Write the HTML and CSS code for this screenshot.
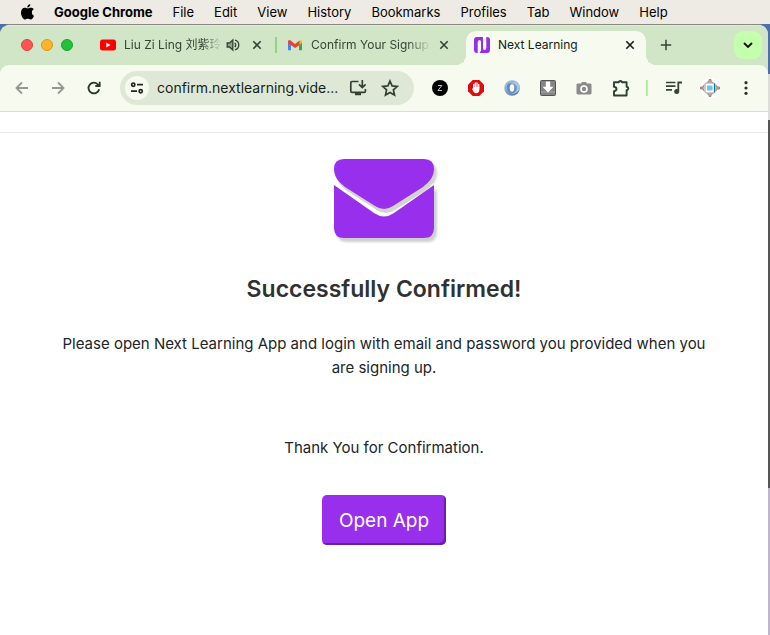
FILE: index.html
```html
<!DOCTYPE html>
<html lang="en">
<head>
<meta charset="utf-8">
<title>Next Learning</title>
<link rel="stylesheet" href="styles.css">
</head>
<body>
<nav class="menubar" aria-label="Menu bar">
  <svg class="apple" viewBox="0 0 13 16"><path d="M9.3 0C9.4 1.900 8 3.600 6.300 3.600 6.100 1.900 7.700.2 9.300 0ZM10.900 8.400c0-1.500.8-2.500 1.900-3.100C12 4.200 10.900 3.800 9.800 3.800c-1.300 0-2.200.7-3 .7-.9 0-1.800-.7-3-.7C1.700 3.800 0 5.500 0 8.700 0 12 2.200 15.500 4.100 15.500c1 0 1.500-.7 2.800-.7s1.700.7 2.800.7c1.500 0 2.800-2.200 3.300-3.800-1.300-.6-2.100-1.800-2.100-3.300Z"/></svg>
  <b>Google Chrome</b><span>File</span><span>Edit</span><span>View</span><span>History</span><span>Bookmarks</span><span>Profiles</span><span>Tab</span><span>Window</span><span>Help</span>
</nav>
<div class="desktop">
  <div class="window">
    <header class="strip">
      <div class="lights"><i class="red"></i><i class="amber"></i><i class="green"></i></div>
      <div class="tab first">
        <svg class="fav" viewBox="0 0 16 16"><rect y="2.500" width="16" height="11" rx="2.500" fill="#f00"/><path d="M6.300 5.600v4.800L10.500 8Z" fill="#fff"/></svg>
        <span class="label fade">Liu Zi Ling 刘紫玲</span>
        <svg class="speaker" viewBox="0 0 14 14" fill="none" stroke="#344534" stroke-width="1.300"><path d="M1.200 5v4H3.500L6.800 12V2L3.500 5Z" fill="#93a48d"/><path d="M8.800 4.800Q10.600 7 8.800 9.200M9 2.200C14 3.600 14 10.400 9 11.800"/></svg>
        <button class="close" aria-label="Close tab"><svg viewBox="0 0 10 10"><path d="M1.300 1.300l7.400 7.400M8.700 1.300L1.300 8.700"/></svg></button>
      </div>
      <div class="tab second">
        <svg class="fav" viewBox="0 0 16 16"><path d="M1 4v9.300h3V7Z" fill="#4285f4"/><path d="M15 4v9.300h-3V7Z" fill="#34a853"/><path d="M12 4.500 13 3.500Q15 2.500 15 5v1L12 8.200Z" fill="#fbbc04"/><path d="M1 4.500Q1.200 2.300 3.400 3.300L8 6.900l4.500-3.500V8L8 11.100 1 6Z" fill="#ea4335"/></svg>
        <span class="label fade">Confirm Your Signup</span>
        <button class="close" aria-label="Close tab"><svg viewBox="0 0 10 10"><path d="M1.300 1.300l7.400 7.400M8.700 1.300L1.300 8.700"/></svg></button>
      </div>
      <div class="tab active">
        <svg class="fav" viewBox="0 0 16 16"><rect width="16" height="16" rx="3" fill="#962eeb"/><path d="M3.700 16V5.500Q3.700 2.900 5.600 2.900Q6.800 2.900 7 4.500V11Q7.300 13.400 9.500 13.400Q12.300 13.200 12.300 10V0H9.200V9.500Q9.200 10.500 8.700 9.500V3Q8 1 6 1" fill="none"/><path d="M3.700 16V5.500Q3.700 3 5.500 3Q7 3 7 5V13.500L5.500 16Z" fill="#fff"/><path d="M9 0V11Q9 13 10.500 13Q12.300 13 12.300 10.500V0Z" fill="#fff"/></svg>
        <span class="label">Next Learning</span>
        <button class="close" aria-label="Close tab"><svg viewBox="0 0 10 10"><path d="M1.300 1.300l7.400 7.400M8.700 1.300L1.300 8.700"/></svg></button>
      </div>
      <button class="newtab" aria-label="New tab"><svg viewBox="0 0 12 12"><path d="M6 .8v10.400M.8 6h10.400"/></svg></button>
      <button class="search" aria-label="Search tabs"><svg viewBox="0 0 10 10"><path d="M1 3l4 4 4-4"/></svg></button>
    </header>
    <div class="chrome">
    <div class="toolbar">
      <button class="nav muted" aria-label="Back"><svg viewBox="0 0 16 16"><path d="M14 8H2.500M8 2.500 2.500 8 8 13.500"/></svg></button>
      <button class="nav muted" aria-label="Forward"><svg viewBox="0 0 16 16"><path d="M2 8h11.500M8 2.500 13.500 8 8 13.500"/></svg></button>
      <button class="nav" aria-label="Reload"><svg viewBox="0 0 16 16"><path d="M13.200 9.200A5.400 5.400 0 1 1 12.200 4.700L13 5.700M13.700 1.800V6H9.300"/></svg></button>
      <div class="omnibox">
        <button class="site" aria-label="Site information"><svg viewBox="0 0 14 14" fill="none" stroke="#1e2b1e" stroke-width="1.700"><circle cx="3.300" cy="3.700" r="1.600"/><path d="M7 3.700h6M1 10.200h6"/><circle cx="10.700" cy="10.200" r="1.600"/></svg></button>
        <input class="url" aria-label="Address" value="confirm.nextlearning.vide...">
        <button class="act" aria-label="Install app"><svg viewBox="0 0 18 18"><path d="M9.500 2.500H3Q1.800 2.500 1.800 3.700v8.500q0 1.200 1.200 1.200h12.200q1.200 0 1.200-1.200V10M13.300 1v7.300M10 5.400l3.300 3.200 3.300-3.200"/><path d="M6 13.500h6v2.700H6Z" fill="#344034" stroke="none"/></svg></button>
        <button class="act" aria-label="Bookmark"><svg viewBox="0 0 18 18"><path d="M9 2l2.100 4.900 5.200.5-3.900 3.500 1.100 5.200L9 13.400l-4.500 2.700 1.100-5.200L1.700 7.400l5.200-.5Z"/></svg></button>
      </div>
      <div class="extensions">
        <svg viewBox="0 0 16 16"><circle cx="8" cy="8" r="8"/><path d="M6 5.500h3.800L6 10.500h4" fill="none" stroke="#ddd" stroke-width=".9"/></svg>
        <svg viewBox="0 0 16 16"><path d="M4.700 0h6.600L16 4.700v6.600L11.300 16H4.700L0 11.300V4.700Z" fill="#e00b0b"/><path d="M5.700 8V4.300M7.300 8V2.900M9 8V3M10.700 8V4.300" stroke="#fff" stroke-width="1.300" stroke-linecap="round"/><path d="M5 7h6.400v2.500Q11.200 13.300 8.200 13.300 6.400 13.300 5.300 11.500L3.900 8.800Q4.400 8 5 8.800Z" fill="#fff"/></svg>
        <svg viewBox="0 0 16 16"><defs><linearGradient id="ring" x2="1" y2="1"><stop stop-color="#b6cee7"/><stop offset="1" stop-color="#3e6ca3"/></linearGradient></defs><circle cx="8" cy="8" r="7.800" fill="url(#ring)"/><path d="M12 .9Q17 4.500 15.500 9 13 14.500 7.200 13.700 13.700 11.800 12.600 6.500 12 4 7 2.600Z" fill="#a6c4e5"/><path d="M4 3.500Q1 8 5 12Q8 14 11 12.500Q6 12 5.500 8Q5.300 5 8 3.500Z" fill="#5f8cbd"/><ellipse cx="8" cy="8" rx="2.200" ry="3.800" fill="#f7faef"/></svg>
        <svg viewBox="0 0 16 16"><rect x=".5" y=".5" width="15" height="15" rx="1" fill="#858585" stroke="#555"/><path d="M1 12h14" stroke="#aaa"/><path d="M5.800 1.500h4.400v5.200h3.300L8 12.600 2.500 6.700h3.300Z" fill="#fff"/></svg>
        <svg viewBox="0 0 16 16"><path d="M5 3.500l1-1.500h4L11 3.500h3.500L15.500 4.500v9l-1 1H1.500L.5 13.500v-9l1-1Z" fill="#8b8b8b"/><circle cx="8" cy="9" r="3" fill="none" stroke="#fff" stroke-width="1.600"/></svg>
        <svg class="puzzle" viewBox="0 0 18 18"><path d="M2 3.300H6.800Q7 2 8.400 2T10 3.300H14.600V7.800Q16.300 8 16.300 9.500T14.600 11.200V16.500H2V12.200Q4.500 11.800 4.500 10T2 7.800Z" fill="none" stroke="#2e402f" stroke-width="1.900" stroke-linejoin="round"/></svg>
      </div>
      <div class="tools">
        <svg viewBox="0 0 16 16"><path d="M0 2.500h9.500M0 6.200h9.500M0 9.900h6" stroke="#344534" stroke-width="1.700"/><path d="M12.300 11V2.500H16" fill="none" stroke="#344534" stroke-width="1.800"/><circle cx="10.700" cy="11.500" r="2.500" fill="#344534"/></svg>
        <svg class="avatar" viewBox="0 0 20 20"><circle cx="10" cy="10" r="10" fill="#fff"/><path d="M7 4.500 9 3.500V1.500h2v2l2 1M7 15.500l2 1v2h2v-2l2-1M4 7 3 9H.5v2H3l1 2M16 7l1 2h2.500v2H17l-1 2" fill="#b8a4a2" stroke="#a08583"/><rect x="4.500" y="4.500" width="11" height="11" rx="2" fill="#a99290"/><rect x="5.500" y="5.500" width="9" height="9" fill="#fff"/><rect x="7" y="7.500" width="5.500" height="5" fill="#63c7fa"/><path d="M14.500 5.500v9" stroke="#237b9a" stroke-width="1.300"/></svg>
        <button class="more" aria-label="More"><svg viewBox="0 0 4 16"><circle cx="2" cy="2.700" r="1.600"/><circle cx="2" cy="8" r="1.600"/><circle cx="2" cy="13.300" r="1.600"/></svg></button>
      </div>
    </div>
    </div>
    <div class="pagebar"></div>
    <main class="page">
      <svg class="mail" viewBox="0 0 104 86">
        <defs>
          <path id="flap" d="M10 0H90Q100 0 100 10C100 18 95 23 89 28L59 47Q50 53 41 47L11 28C5 23 0 18 0 10Q0 0 10 0Z"/>
          <path id="pocket" d="M0 26 40 54Q50 61 60 54L100 26V69Q100 79 90 79H10Q0 79 0 69Z"/>
          <filter id="soft" x="-10%" y="-10%" width="120%" height="120%"><feGaussianBlur stdDeviation=".8"/></filter>
        </defs>
        <g fill="#cfcfcf" filter="url(#soft)"><use href="#flap" x="3" y="4"/><use href="#pocket" x="3" y="4"/></g>
        <path d="M0 20 41 50Q50 56 59 50L99 24V28L60 56Q50 61 40 56L0 27Z" fill="#fff"/>
        <use href="#flap" x="2" y="4" fill="#d3d3d3"/>
        <path d="M0 21 8 27 3 30 0 27Z" fill="#fff"/>
        <g fill="#982fed"><use href="#flap"/><use href="#pocket"/></g>
      </svg>
      <h1>Successfully Confirmed!</h1>
      <p class="message">Please open Next Learning App and login with email and password you provided when you are signing up.</p>
      <p class="thanks">Thank You for Confirmation.</p>
      <button class="open">Open App</button>
    </main>
  </div>
</div>
</body>
</html>
```

FILE: styles.css
```css
* { box-sizing: border-box; }
body {
  margin: 0;
  min-height: 100vh;
  display: flex;
  flex-direction: column;
  font-family: Inter, "Noto Sans CJK SC", sans-serif;
  color: #212529;
}
button { border: 0; padding: 0; background: none; font: inherit; color: inherit; display: grid; place-items: center; flex: none; }
svg { display: block; flex: none; }
.menubar { height: 24px; display: flex; align-items: center; gap: 20px; padding-left: 21px; background: #eeebe4; color: #000; font-size: 13px; line-height: 16px; white-space: nowrap; }
.apple { width: 13px; height: 16px; }
.desktop { flex: 1; display: flex; padding-right: 2px; background: linear-gradient(#4d70ab 0 50px, #ddd 50px 96px, #555 96px 464px, #c0b5d0 464px); }
.window { flex: 1; min-width: 0; display: flex; flex-direction: column; border-top: 1px solid #8b8982; border-radius: 10px 10px 0 0; background: #fff; overflow: hidden; }
.strip { height: 40px; display: flex; align-items: center; padding: 0 6px 0 21px; background: #d1e5c7; font-size: 12px; color: #344534; box-shadow: inset 0 1px #dfeed8; }
.lights { display: flex; gap: 8px; width: 71px; }
.lights i { width: 12px; height: 12px; border-radius: 50%; }
.red { background: #ff5550; border: 1px solid #dc423d; }
.amber { background: #feb429; border: 1px solid #dd941b; }
.green { background: #24c138; border: 1px solid #17a329; }
.tab { display: flex; align-items: center; gap: 8px; height: 34px; margin-top: 6px; padding: 0 11px 6px 8px; min-width: 0; }
.fav { width: 16px; height: 16px; }
.label { flex: 1; min-width: 0; height: 16px; line-height: 16px; overflow: hidden; white-space: nowrap; }
.fade { -webkit-mask-image: linear-gradient(90deg, #000 80%, transparent); mask-image: linear-gradient(90deg, #000 80%, transparent); }
.tab.first { width: 180px; padding-right: 10px; }
.first .label { margin-right: -4px; }
.speaker { width: 14px; height: 14px; }
.first .close { margin-left: 4px; }
.close svg { width: 10px; height: 10px; fill: none; stroke: currentColor; stroke-width: 1.6; }
.tab.second { width: 190px; padding-right: 13px; padding-left: 15px; position: relative; }
.tab.second::before { content: ""; position: absolute; left: 3px; top: 6px; width: 2px; height: 16px; background: #90d584; }
.tab.active { width: 180px; margin-left: 4px; background: #f7faef; color: #141d14; border-radius: 10px 10px 0 0; position: relative; }
.tab.active::before, .tab.active::after { content: ""; position: absolute; bottom: 0; width: 10px; height: 10px; }
.tab.active::before { left: -10px; background: radial-gradient(circle at 0 0, transparent 10px, #f7faef 10px); }
.tab.active::after { right: -10px; background: radial-gradient(circle at 100% 0, transparent 10px, #f7faef 10px); }
.newtab { width: 28px; height: 28px; margin-left: 6px; }
.newtab svg { width: 12px; height: 12px; fill: none; stroke: #344534; stroke-width: 1.5; }
.search { width: 28px; height: 28px; margin-left: auto; border-radius: 9px; background: #c4ffae; }
.search svg { width: 10px; height: 10px; fill: none; stroke: #111; stroke-width: 1.9; }
.chrome { background: linear-gradient(#d1e5c7 10px, #f7faef 10px); }
.toolbar { height: 47px; display: flex; align-items: center; padding: 0 14px; border-bottom: 1px solid #d9dfd2; background: #f7faef; border-radius: 9px 9px 0 0; }
.nav { width: 16px; height: 16px; margin-right: 20px; color: #293829; }
.nav svg { width: 16px; height: 16px; fill: none; stroke: currentColor; stroke-width: 1.8; }
.muted { color: #949890; }
.omnibox { flex: 1; min-width: 0; height: 34px; margin-left: -2px; display: flex; align-items: center; gap: 14px; padding: 0 15px 0 5px; border-radius: 17px; background: #dfe8d7; }
.site { width: 24px; height: 24px; border-radius: 50%; background: #f7faef; }
.site svg { width: 14px; height: 14px; }
.url { flex: 1; min-width: 0; height: 20px; margin-left: -6px; margin-right: -4px; border: 0; padding: 0 0 2px; background: none; font: inherit; font-size: 14px; color: #171f17; }
.act svg { width: 18px; height: 18px; fill: none; stroke: #344034; stroke-width: 1.7; }
.extensions { display: flex; align-items: center; gap: 20px; margin-left: 18px; }
.extensions svg { width: 16px; height: 16px; }
.extensions .puzzle { width: 18px; height: 18px; }
.tools { display: flex; align-items: center; gap: 18px; margin-left: 16px; padding-left: 18px; border-left: 2px solid #b5eda1; height: 16px; }
.tools > svg { width: 16px; height: 16px; }
.tools .avatar { width: 20px; height: 20px; }
.more { width: 16px; }
.more svg { width: 4px; height: 16px; fill: #293829; }
.pagebar { height: 21px; border-bottom: 1px solid #e7e7e7; }
.page { flex: 1; padding: 26px 54px 0; display: flex; flex-direction: column; align-items: center; text-align: center; }
.mail { width: 104px; height: 86px; margin-left: 4px; }
h1 { margin: 28px 0 0; font-size: 23px; line-height: 32px; font-weight: 600; color: #303232; }
p { margin: 0; font-size: 15px; line-height: 24px; }
.message { margin-top: 27px; }
.thanks { margin-top: 56px; }
.open { margin-top: 35px; padding: 0 17px; height: 50px; border-radius: 5px; background: #982fed; color: #fff; font-size: 19px; box-shadow: inset -2px -2px #6a1fa8; }
```
